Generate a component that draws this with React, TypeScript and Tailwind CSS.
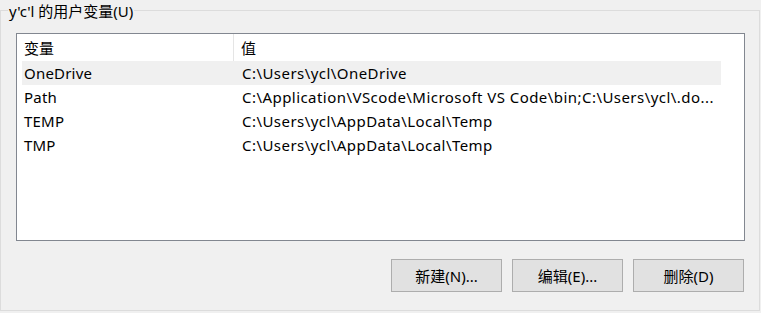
import React from "react";

const rows = [
  { name: "OneDrive", value: "C:\\Users\\ycl\\OneDrive", selected: true },
  { name: "Path", value: "C:\\Application\\VScode\\Microsoft VS Code\\bin;C:\\Users\\ycl\\.do...", selected: false },
  { name: "TEMP", value: "C:\\Users\\ycl\\AppData\\Local\\Temp", selected: false },
  { name: "TMP", value: "C:\\Users\\ycl\\AppData\\Local\\Temp", selected: false },
];

export default function App() {
  return (
    <div
      className="w-[761px] h-[313px] bg-[#f0f0f0] text-black text-[15px] leading-[20px] overflow-hidden pt-[10px]"
      style={{ fontFamily: '"Noto Sans", "Noto Sans CJK SC", sans-serif' }}
    >
      <div className="relative w-[760px] h-[301px] border border-[#dcdcdc]">
        <div className="absolute left-[7px] top-[-10px] px-[1px] bg-[#f0f0f0] whitespace-nowrap">
          y'c'l 的用户变量(U)
        </div>
        <div className="ml-[15px] mt-[22px] w-[729px] h-[208px] border border-[#828790] bg-white">
          <div className="flex h-[27px] w-[704px] items-center">
            <div className="w-[217px] h-full flex items-center pl-[7px] border-r border-[#e5e5e5]">变量</div>
            <div className="flex-1 pl-[7px]">值</div>
          </div>
          {rows.map((r) => (
            <div
              key={r.name}
              className={`ml-[5px] w-[699px] h-[24px] flex items-center whitespace-nowrap ${r.selected ? "bg-[#f0f0f0]" : ""}`}
            >
              <div className="w-[212px] pl-[2px] tracking-[0.2px]">{r.name}</div>
              <div className="pl-[8px] tracking-[0.45px]">{r.value}</div>
            </div>
          ))}
        </div>
        <div className="flex justify-end gap-[10px] pr-[15px] mt-[18px]">
          {["新建(N)...", "编辑(E)...", "删除(D)"].map((t) => (
            <div
              key={t}
              className="w-[111px] h-[33px] bg-[#e1e1e1] border border-[#adadad] flex items-center justify-center"
            >
              {t}
            </div>
          ))}
        </div>
      </div>
    </div>
  );
}
